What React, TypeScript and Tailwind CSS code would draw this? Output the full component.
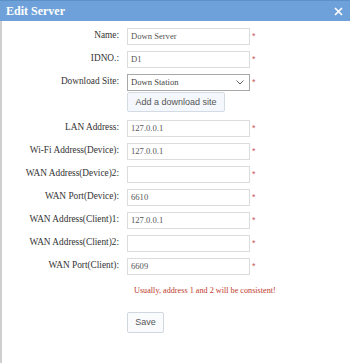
import React from 'react';

const rows = [
  { label: 'LAN Address:', value: '127.0.0.1' },
  { label: 'Wi-Fi Address(Device):', value: '127.0.0.1' },
  { label: 'WAN Address(Device)2:', value: '' },
  { label: 'WAN Port(Device):', value: '6610' },
  { label: 'WAN Address(Client)1:', value: '127.0.0.1' },
  { label: 'WAN Address(Client)2:', value: '' },
  { label: 'WAN Port(Client):', value: '6609' },
];

function Star() {
  return <span className="ml-[2px] text-[9px] leading-none text-[#cc5560] font-['Liberation_Sans',sans-serif]">*</span>;
}

function Label({ text }: { text: string }) {
  return (
    <div className="w-[117px] text-right text-[9.3px] text-[#333] font-['Liberation_Serif',serif] whitespace-nowrap">
      {text}
    </div>
  );
}

function Field({ label, value }: { label: string; value: string }) {
  return (
    <div className="flex items-center h-[16px]">
      <Label text={label} />
      <div className="ml-[8px] w-[123px] h-[17px] border border-[#dcdcdc] bg-white px-[3px] flex items-center text-[8.6px] text-[#555] font-['Liberation_Serif',serif]">
        {value}
      </div>
      <Star />
    </div>
  );
}

export default function App() {
  return (
    <div className="w-[350px] h-[363px] bg-white flex flex-col font-['Liberation_Serif',serif]">
      <div className="h-[21px] bg-[#6ea1d9] border-t border-[#5e90c8] flex items-center justify-between pl-[6px] pr-[7px] text-white">
        <span className="text-[12px] font-bold">Edit Server</span>
        <svg width="9" height="9" viewBox="0 0 9 9">
          <path d="M1 1L8 8M8 1L1 8" stroke="white" strokeWidth="1.7" />
        </svg>
      </div>
      <div className="flex-1 border-l-2 border-[#cfcfcf] pt-[7px] flex flex-col">
        <div className="flex flex-col gap-[7px]">
          <Field label="Name:" value="Down Server" />
          <Field label="IDNO.:" value="D1" />
          <div className="flex items-center h-[16px]">
            <Label text="Download Site:" />
            <div className="ml-[8px] w-[123px] h-[17px] border border-[#a8a8a8] bg-white px-[3px] flex items-center justify-between text-[8.6px] text-[#444]">
              <span>Down Station</span>
              <svg width="8" height="5" viewBox="0 0 8 5" className="mr-[2px]">
                <path d="M0.5 0.5L4 4L7.5 0.5" stroke="#666" fill="none" strokeWidth="1" />
              </svg>
            </div>
            <Star />
          </div>
        </div>
        <div className="pl-[125px] mt-[2px] flex">
          <button className="h-[20px] w-[98px] border border-[#d3dbe4] bg-[#f4f7fb] rounded-[2px] text-[9px] leading-none text-[#555] font-['Liberation_Sans',sans-serif]">
            Add a download site
          </button>
        </div>
        <div className="flex flex-col gap-[7px] mt-[8px]">
          {rows.map((r) => (
            <Field key={r.label} label={r.label} value={r.value} />
          ))}
        </div>
        <div className="pl-[132px] mt-[12px] text-[8.2px] leading-[10px] text-[#c0392b]">
          Usually, address 1 and 2 will be consistent!
        </div>
        <div className="pl-[125px] mt-[16px] flex">
          <button className="h-[21px] w-[37px] border border-[#d0d7df] bg-[#fafbfc] rounded-[2px] text-[9px] leading-none text-[#555] font-['Liberation_Sans',sans-serif]">
            Save
          </button>
        </div>
      </div>
    </div>
  );
}
